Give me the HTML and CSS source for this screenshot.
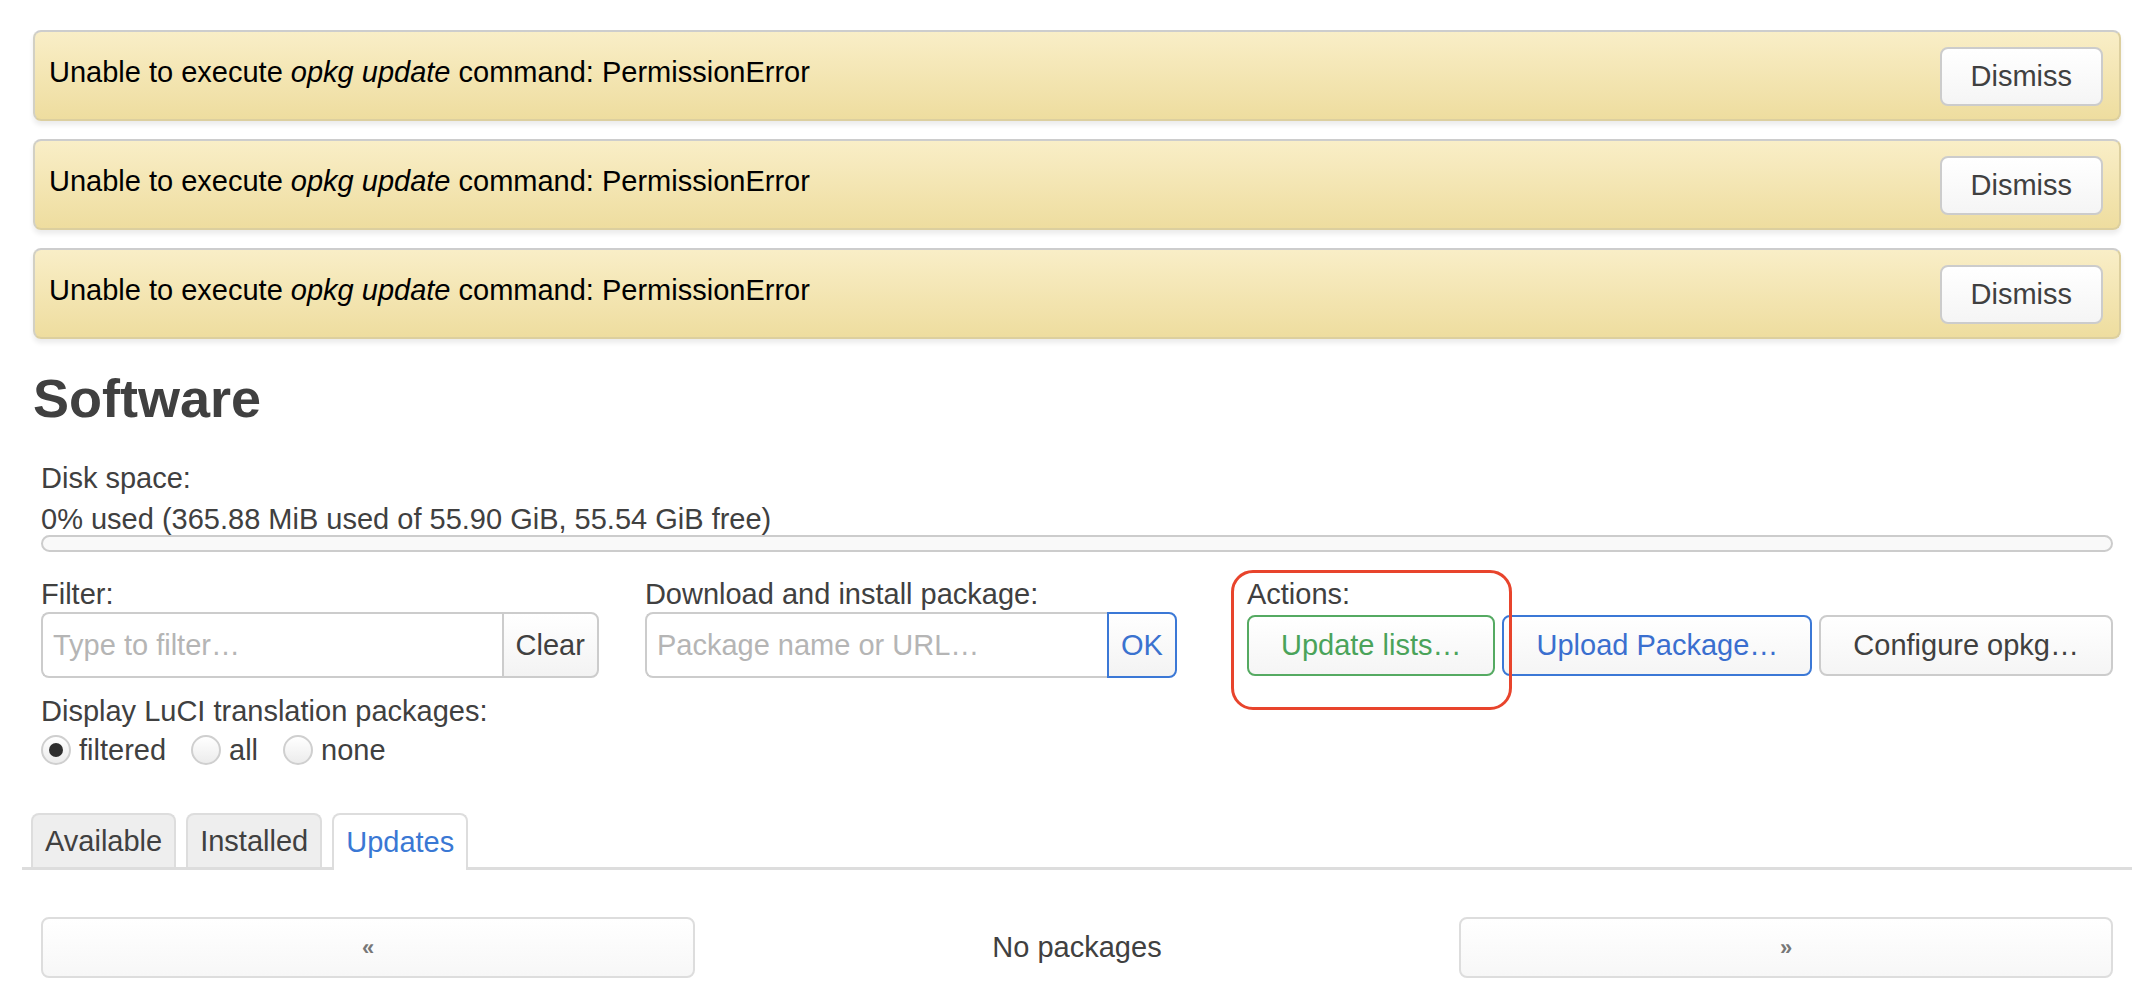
FILE: index.html
```html
<!DOCTYPE html>
<html lang="en">
<head>
<meta charset="utf-8">
<title>Software</title>
<link rel="stylesheet" href="styles.css">
</head>
<body>
<div class="page">
  <div class="alerts">
    <div class="alert">
      <p class="alert-text">Unable to execute <em>opkg update</em> command: PermissionError</p>
      <button class="btn dismiss">Dismiss</button>
    </div>
    <div class="alert">
      <p class="alert-text">Unable to execute <em>opkg update</em> command: PermissionError</p>
      <button class="btn dismiss">Dismiss</button>
    </div>
    <div class="alert">
      <p class="alert-text">Unable to execute <em>opkg update</em> command: PermissionError</p>
      <button class="btn dismiss">Dismiss</button>
    </div>
  </div>

  <h2 class="title">Software</h2>

  <div class="content">
    <div class="disk">
      <div class="label">Disk space:</div>
      <div class="disk-value">0% used (365.88 MiB used of 55.90 GiB, 55.54 GiB free)</div>
      <div class="progress"></div>
    </div>

    <div class="controls">
      <div class="group filter-group">
        <div class="label">Filter:</div>
        <div class="input-group">
          <input class="text-input" type="text" placeholder="Type to filter…">
          <button class="addon">Clear</button>
        </div>
      </div>
      <div class="group download-group">
        <div class="label">Download and install package:</div>
        <div class="input-group">
          <input class="text-input" type="text" placeholder="Package name or URL…">
          <button class="addon addon-blue">OK</button>
        </div>
      </div>
      <div class="group actions-group">
        <div class="label">Actions:</div>
        <div class="actions">
          <button class="btn action green">Update lists…</button>
          <button class="btn action blue">Upload Package…</button>
          <button class="btn action">Configure opkg…</button>
        </div>
        <div class="annotation"></div>
      </div>
    </div>

    <div class="translations">
      <div class="label">Display LuCI translation packages:</div>
      <div class="radios">
        <label class="radio"><input type="radio" name="tr" checked><span>filtered</span></label>
        <label class="radio"><input type="radio" name="tr"><span>all</span></label>
        <label class="radio"><input type="radio" name="tr"><span>none</span></label>
      </div>
    </div>
  </div>

  <div class="tabs">
    <div class="tab">Available</div>
    <div class="tab">Installed</div>
    <div class="tab active">Updates</div>
  </div>

  <div class="pager">
    <button class="pager-btn">«</button>
    <div class="pager-info">No packages</div>
    <button class="pager-btn">»</button>
  </div>
</div>
</body>
</html>
```

FILE: styles.css
```css
html, body {
  margin: 0;
  padding: 0;
  background: #ffffff;
}

body {
  font-family: "Liberation Sans", Arial, Helvetica, sans-serif;
  font-size: 29px;
  color: #404040;
}

.page {
  padding: 30px 33px 0 33px;
}

/* Alerts */
.alerts {
  display: flex;
  flex-direction: column;
  gap: 18px;
}

.alert {
  height: 91px;
  box-sizing: border-box;
  display: flex;
  align-items: center;
  justify-content: space-between;
  padding: 0 16px 0 14px;
  border: 2px solid #dccf9f;
  border-top-color: #cdcdcd;
  border-left-color: #d2d0c4;
  border-radius: 8px;
  background: linear-gradient(to bottom, #f9eec7 0%, #eedd9f 100%);
  box-shadow: 0 4px 5px rgba(0, 0, 0, 0.08);
}

.alert-text {
  margin: 0 0 8px 0;
  color: #000000;
  font-size: 29px;
  line-height: 34px;
}

.alert-text em {
  font-style: italic;
}

.btn {
  font-family: "Liberation Sans", Arial, Helvetica, sans-serif;
  font-size: 29px;
  color: #404040;
  background: linear-gradient(to bottom, #ffffff 0%, #f5f5f5 100%);
  border: 2px solid #cccccc;
  border-radius: 8px;
  cursor: pointer;
  box-sizing: border-box;
  white-space: nowrap;
}

.dismiss {
  height: 59px;
  padding: 0 29px;
  margin-top: 2px;
}

/* Heading */
.title {
  margin: 27px 0 0 0;
  font-size: 54px;
  line-height: 65px;
  font-weight: bold;
  color: #404040;
}

.content {
  padding: 0 8px;
}

.label {
  font-size: 29px;
  line-height: 34px;
  color: #404040;
}

.disk {
  margin-top: 27px;
}

.disk .label {
  line-height: 40px;
}

.disk-value {
  margin-top: 5px;
  line-height: 32px;
  color: #404040;
}

.progress {
  height: 17px;
  box-sizing: border-box;
  border: 2px solid #cccccc;
  border-radius: 9px;
  background: #f9f9f9;
}

/* Controls row */
.controls {
  display: flex;
  margin-top: 25px;
}

.group {
  display: flex;
  flex-direction: column;
}

.filter-group {
  width: 561px;
  margin-right: 46px;
}

.download-group {
  width: 535px;
  margin-right: 70px;
}

.actions-group {
  flex: 1;
  position: relative;
}

.input-group {
  margin-top: 1px;
  display: flex;
  height: 66px;
}

.text-input {
  flex: 1;
  min-width: 0;
  box-sizing: border-box;
  height: 66px;
  border: 2px solid #cccccc;
  border-right: none;
  border-radius: 8px 0 0 8px;
  padding: 0 10px;
  font-family: "Liberation Sans", Arial, Helvetica, sans-serif;
  font-size: 29px;
  color: #404040;
  background: #ffffff;
  outline: none;
}

.text-input::placeholder {
  color: #b5b5b5;
}

.addon {
  height: 66px;
  box-sizing: border-box;
  padding: 0 12px;
  border: 2px solid #cccccc;
  border-radius: 0 8px 8px 0;
  background: linear-gradient(to bottom, #ffffff 0%, #f3f3f3 100%);
  font-family: "Liberation Sans", Arial, Helvetica, sans-serif;
  font-size: 29px;
  color: #404040;
}

.addon-blue {
  border-color: #3b78d6;
  color: #3a72cf;
  padding: 0 12px;
}

.actions {
  display: flex;
  align-items: center;
  gap: 7px;
  height: 66px;
  margin-top: 1px;
}

.action {
  height: 61px;
  padding: 0 32px;
}

.action.green {
  border-color: #55aa62;
  color: #4aa35a;
}

.action.blue {
  border-color: #3b78d6;
  color: #3a6fcf;
}

.annotation {
  position: absolute;
  left: -16px;
  top: -7px;
  width: 281px;
  height: 140px;
  box-sizing: border-box;
  border: 3px solid #e8442c;
  border-radius: 22px;
  pointer-events: none;
}

/* Translations */
.translations {
  margin-top: 16px;
}

.radios {
  display: flex;
  align-items: center;
  margin-top: 5px;
  height: 34px;
}

.radio {
  display: flex;
  align-items: center;
  margin-right: 25px;
  line-height: 34px;
  color: #404040;
}

.radio input {
  appearance: none;
  -webkit-appearance: none;
  width: 30px;
  height: 30px;
  margin: 0 8px 0 0;
  border: 2px solid #cfcfcf;
  border-radius: 50%;
  background: linear-gradient(to bottom, #ffffff 0%, #ececec 100%);
  box-sizing: border-box;
  position: relative;
}

.radio input:checked::after {
  content: "";
  position: absolute;
  left: 6px;
  top: 6px;
  width: 14px;
  height: 14px;
  border-radius: 50%;
  background: #2f2f2f;
}

/* Tabs */
.tabs {
  display: flex;
  gap: 10px;
  margin: 46px -11px 0 -11px;
  padding-left: 9px;
  border-bottom: 3px solid #dddddd;
  height: 54px;
}

.tab {
  height: 54px;
  box-sizing: border-box;
  padding: 0 12px;
  display: flex;
  align-items: center;
  border: 2px solid #dddddd;
  border-bottom: none;
  border-radius: 8px 8px 0 0;
  background: #eeeeee;
  color: #404040;
  font-size: 29px;
}

.tab.active {
  background: #ffffff;
  color: #3a78d4;
  height: 57px;
  margin-bottom: -3px;
}

/* Pager */
.pager {
  display: grid;
  grid-template-columns: 654px 1fr 654px;
  align-items: center;
  margin-top: 47px;
  padding: 0 8px;
}

.pager-btn {
  height: 61px;
  box-sizing: border-box;
  border: 2px solid #dddddd;
  border-radius: 8px;
  background: linear-gradient(to bottom, #ffffff 0%, #f7f7f7 100%);
  font-family: "Liberation Sans", Arial, Helvetica, sans-serif;
  font-size: 22px;
  font-weight: bold;
  color: #777777;
}

.pager-info {
  text-align: center;
  font-size: 29px;
  color: #404040;
}
```
